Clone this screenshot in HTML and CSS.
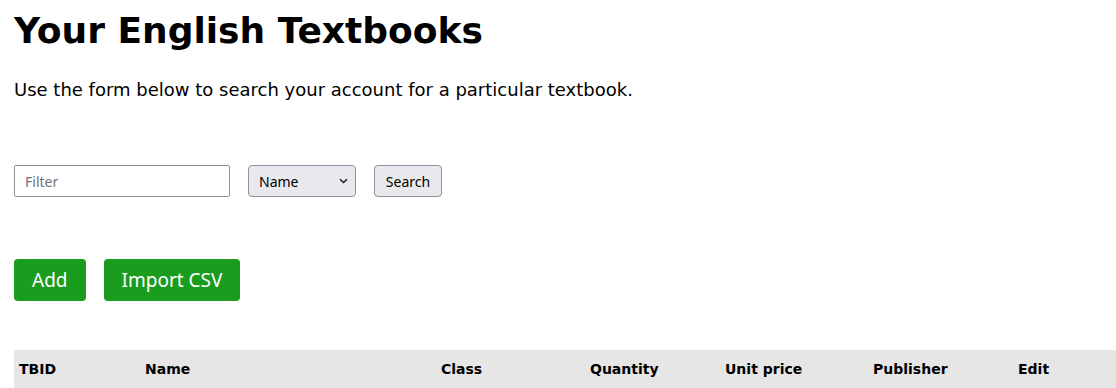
FILE: index.html
```html
<!DOCTYPE html>
<html lang="en">
<head>
<meta charset="utf-8">
<title>Your English Textbooks</title>
<link rel="stylesheet" href="styles.css">
</head>
<body>
<main class="page">
  <h1 class="title">Your English Textbooks</h1>
  <p class="intro">Use the form below to search your account for a particular textbook.</p>
  <form class="filter-form">
    <input class="filter-input" type="text" placeholder="Filter">
    <div class="select-wrap">
      <select class="filter-select">
        <option>Name</option>
      </select>
      <svg class="chev" width="9" height="6" viewBox="0 0 9 6"><path d="M1 1.2 L4.5 4.6 L8 1.2" fill="none" stroke="#1a1a1a" stroke-width="1.4"/></svg>
    </div>
    <button class="search-btn" type="button">Search</button>
  </form>
  <div class="actions">
    <button class="green-btn" type="button">Add</button>
    <button class="green-btn" type="button">Import CSV</button>
  </div>
  <table class="books">
    <thead>
      <tr>
        <th class="c-id">TBID</th>
        <th class="c-name">Name</th>
        <th class="c-class">Class</th>
        <th class="c-qty">Quantity</th>
        <th class="c-price">Unit price</th>
        <th class="c-pub">Publisher</th>
        <th class="c-edit">Edit</th>
      </tr>
    </thead>
  </table>
</main>
</body>
</html>
```
FILE: styles.css
```css
html, body {
  margin: 0;
  padding: 0;
  background: #ffffff;
}
body {
  font-family: "DejaVu Sans", sans-serif;
  color: #000;
  overflow: hidden;
}
.page {
  padding: 0 0 0 14px;
}
.title {
  font-size: 36px;
  font-weight: bold;
  line-height: 48px;
  margin: 7px 0 0 0;
}
.intro {
  font-size: 18px;
  line-height: 24px;
  margin: 23px 0 0 0;
}
.filter-form {
  display: flex;
  align-items: center;
  gap: 18px;
  margin-top: 63px;
}
.filter-input {
  box-sizing: border-box;
  width: 216px;
  height: 32px;
  border: 1px solid #8f8f9d;
  border-radius: 2px;
  padding: 0 10px;
  font-family: "Noto Sans", sans-serif;
  font-size: 14px;
  color: #000;
  outline: none;
}
.filter-input::placeholder {
  color: #6f6f78;
}
.select-wrap {
  position: relative;
  display: flex;
}
.filter-select {
  box-sizing: border-box;
  width: 108px;
  height: 32px;
  border: 1px solid #8f8f9d;
  border-radius: 4px;
  background: #e9e9ed;
  padding: 0 10px;
  font-family: "Noto Sans", sans-serif;
  font-size: 14px;
  color: #000;
  appearance: none;
  -webkit-appearance: none;
}
.chev {
  position: absolute;
  right: 8px;
  top: 13px;
  pointer-events: none;
}
.search-btn {
  box-sizing: border-box;
  width: 68px;
  height: 32px;
  border: 1px solid #8f8f9d;
  border-radius: 4px;
  background: #e9e9ed;
  font-family: "Noto Sans", sans-serif;
  font-size: 14px;
  color: #000;
  padding: 0;
}
.actions {
  display: flex;
  gap: 18px;
  margin-top: 62px;
}
.green-btn {
  box-sizing: border-box;
  height: 42px;
  padding: 0 18px;
  border: none;
  border-radius: 4px;
  background: #1a9c1f;
  color: #ffffff;
  font-family: "Noto Sans", sans-serif;
  font-size: 19px;
}
.books {
  border-collapse: collapse;
  margin-top: 49px;
  width: 1110px;
  table-layout: fixed;
}
.books th {
  background: #e6e6e6;
  text-align: left;
  font-size: 14px;
  font-weight: bold;
  height: 38px;
  padding: 0 5px;
  box-sizing: border-box;
}
.c-id { width: 126px; }
.c-name { width: 296px; }
.c-class { width: 149px; }
.c-qty { width: 135px; }
.c-price { width: 148px; }
.c-pub { width: 145px; }
.c-edit { width: 111px; }
```
